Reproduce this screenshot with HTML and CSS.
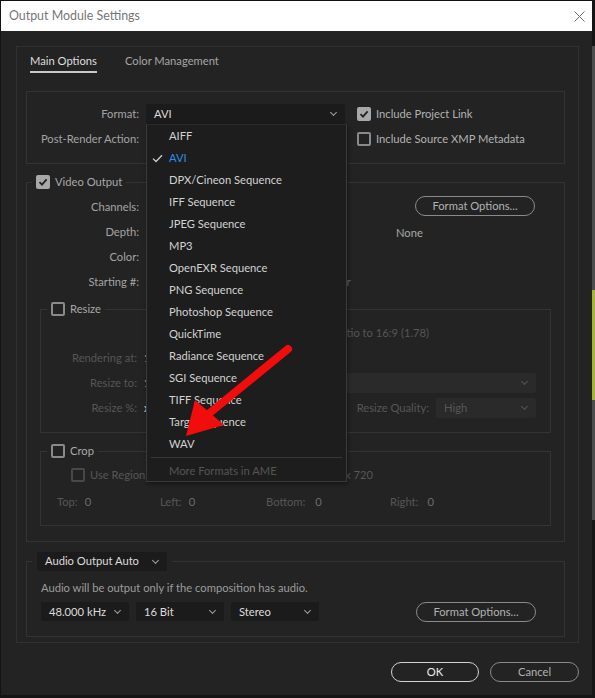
FILE: index.html
```html
<!DOCTYPE html>
<html lang="en">
<head>
  <meta charset="UTF-8">
  <title>Output Module Settings</title>
  <link rel="stylesheet" href="styles.css">
</head>
<body>
  <div class="window">
    <div class="titlebar">
      <span class="title">Output Module Settings</span>
      <svg class="close" width="11" height="11" viewBox="0 0 11 11">
        <path d="M0.5 0.5 L10.5 10.5 M10.5 0.5 L0.5 10.5" stroke="#6a6a6a" stroke-width="1" fill="none"/>
      </svg>
    </div>

    <div class="panel">
      <div class="tabs">
        <span class="tab active">Main Options</span>
        <span class="tab">Color Management</span>
      </div>

      <!-- Format -->
      <div class="box format-box">
        <div class="row">
          <span class="lbl">Format:</span>
          <div class="select format-select">AVI</div>
          <span class="check"><span class="cb on"><svg width="10" height="10" viewBox="0 0 10 10"><path d="M1.5 5.2 L4 7.6 L8.6 2.4" stroke="#222" stroke-width="1.8" fill="none"/></svg></span>Include Project Link</span>
        </div>
        <div class="row">
          <span class="lbl">Post-Render Action:</span>
          <div class="select format-select">None</div>
          <span class="check"><span class="cb"></span>Include Source XMP Metadata</span>
        </div>
      </div>

      <!-- Video output -->
      <fieldset class="group video">
        <legend><span class="cb on"><svg width="10" height="10" viewBox="0 0 10 10"><path d="M1.5 5.2 L4 7.6 L8.6 2.4" stroke="#222" stroke-width="1.8" fill="none"/></svg></span>Video Output</legend>
        <div class="video-top">
          <div class="video-rows">
            <div class="row">
              <span class="lbl">Channels:</span>
              <div class="select field">RGB</div>
            </div>
            <div class="row">
              <span class="lbl">Depth:</span>
              <div class="select field">Millions of Colors</div>
            </div>
            <div class="row">
              <span class="lbl">Color:</span>
              <div class="select field">Premultiplied (Matted)</div>
            </div>
            <div class="row">
              <span class="lbl">Starting #:</span>
              <span class="value">0</span>
              <span class="check frame-check"><span class="cb"></span>Use Comp Frame Number</span>
            </div>
          </div>
          <div class="video-side">
            <button class="btn">Format Options...</button>
            <span class="codec">None</span>
          </div>
        </div>

        <fieldset class="group sub resize">
          <legend><span class="cb"></span>Resize</legend>
          <div class="row lock-row">
            <span class="check dim"><span class="cb dim"></span>Lock Aspect Ratio to 16:9 (1.78)</span>
          </div>
          <div class="row">
            <span class="lbl sub-lbl dim">Rendering at:</span>
            <span class="value dim">1280 x 720</span>
          </div>
          <div class="row">
            <span class="lbl sub-lbl dim">Resize to:</span>
            <span class="value dim">1280 x 720</span>
            <div class="select disabled resize-select">Custom</div>
          </div>
          <div class="row">
            <span class="lbl sub-lbl dim">Resize %:</span>
            <span class="value dim">x</span>
            <span class="quality-lbl dim">Resize Quality:</span>
            <div class="select disabled quality-select">High</div>
          </div>
        </fieldset>

        <fieldset class="group sub crop">
          <legend><span class="cb"></span>Crop</legend>
          <div class="row roi-row">
            <span class="check dim"><span class="cb dim"></span>Use Region of Interest</span>
            <span class="dim">Final Size: 1280 x 720</span>
          </div>
          <div class="row crop-fields">
            <span class="crop-field"><span class="dim">Top:</span><span class="num">0</span></span>
            <span class="crop-field"><span class="dim">Left:</span><span class="num">0</span></span>
            <span class="crop-field"><span class="dim">Bottom:</span><span class="num">0</span></span>
            <span class="crop-field"><span class="dim">Right:</span><span class="num">0</span></span>
          </div>
        </fieldset>
      </fieldset>

      <!-- Audio -->
      <fieldset class="group audio">
        <legend><div class="select audio-mode">Audio Output Auto</div></legend>
        <div class="audio-body">
          <p class="audio-note">Audio will be output only if the composition has audio.</p>
          <div class="row audio-row">
            <div class="select audio-select">48.000 kHz</div>
            <div class="select audio-select">16 Bit</div>
            <div class="select audio-select">Stereo</div>
            <button class="btn audio-btn">Format Options...</button>
          </div>
        </div>
      </fieldset>
    </div>

    <div class="footer">
      <button class="btn btn-ok">OK</button>
      <button class="btn btn-cancel">Cancel</button>
    </div>

    <!-- open Format menu -->
    <div class="menu">
      <div class="menu-item">AIFF</div>
      <div class="menu-item selected"><svg class="tick" width="11" height="9" viewBox="0 0 11 9"><path d="M1 4.6 L4 7.5 L10 1.2" stroke="#cfcfcf" stroke-width="1.3" fill="none"/></svg>AVI</div>
      <div class="menu-item">DPX/Cineon Sequence</div>
      <div class="menu-item">IFF Sequence</div>
      <div class="menu-item">JPEG Sequence</div>
      <div class="menu-item">MP3</div>
      <div class="menu-item">OpenEXR Sequence</div>
      <div class="menu-item">PNG Sequence</div>
      <div class="menu-item">Photoshop Sequence</div>
      <div class="menu-item">QuickTime</div>
      <div class="menu-item">Radiance Sequence</div>
      <div class="menu-item">SGI Sequence</div>
      <div class="menu-item">TIFF Sequence</div>
      <div class="menu-item">Targa Sequence</div>
      <div class="menu-item">WAV</div>
      <div class="menu-sep"></div>
      <div class="menu-item muted">More Formats in AME</div>
    </div>

    <!-- red annotation arrow -->
    <svg class="arrow" width="595" height="698" viewBox="0 0 595 698">
      <line x1="288" y1="349" x2="206" y2="416" stroke="#f20d0d" stroke-width="8" stroke-linecap="round"/>
      <polygon points="195,400 224,425 186,436" fill="#f20d0d"/>
    </svg>
  </div>
</body>
</html>
```

FILE: styles.css
```css
* {
  box-sizing: border-box;
}

body {
  margin: 0;
  font-family: Lato, "Noto Sans", sans-serif;
  font-size: 11.2px;
  line-height: 16px;
  color: #a4a4a4;
  background: linear-gradient(#151515 0 46px, #4c4c4c 46px 290px, #a6b33a 290px 400px, #4c4c4c 400px 520px, #161616 520px 695px, #dcdcdc 695px);
}

.window {
  position: relative;
  width: 592px;
  height: 695px;
  background-color: #232323;
  border-top: 1px solid #101010;
  border-left: 1px solid #141414;
  overflow: hidden;
}

.titlebar {
  height: 30px;
  background-color: #fff;
  display: flex;
  align-items: center;
  justify-content: space-between;
  padding: 0 7px 0 8px;
}

.title {
  font-size: 12.4px;
  color: #767676;
}

/* main tab panel */
.panel {
  margin: 15px 0 0 15px;
  width: 563px;
  height: 597px;
  border: 1px solid #303030;
  padding: 6px 13px 0 9px;
}

.tabs {
  display: flex;
  gap: 28px;
  padding-left: 4px;
}

.tab {
  color: #a6a6a6;
  padding-bottom: 2px;
}

.tab.active {
  color: #dedede;
  border-bottom: 2px solid #c8c8c8;
}

.box {
  border: 1px solid #333;
}

.format-box {
  margin-top: 18px;
  height: 73px;
  padding-top: 9px;
}

.row {
  display: flex;
  align-items: center;
  height: 25px;
}

.lbl {
  width: 112px;
  flex: none;
  text-align: right;
  margin-right: 7px;
}

.select {
  position: relative;
  height: 20px;
  display: flex;
  align-items: center;
  padding-left: 8px;
  background-color: #1b1b1b;
  border-radius: 2px;
  color: #dcdcdc;
  white-space: nowrap;
}

.select::after {
  content: "";
  position: absolute;
  right: 9px;
  top: 6px;
  width: 4px;
  height: 4px;
  border-right: 1px solid #a0a0a0;
  border-bottom: 1px solid #a0a0a0;
  transform: rotate(45deg);
}

.select.disabled {
  background-color: #2a2a2a;
  color: #575757;
}

.select.disabled::after {
  border-color: #555;
}

.format-select {
  width: 199px;
}

.check {
  display: flex;
  align-items: center;
  gap: 5px;
  color: #b2b2b2;
  white-space: nowrap;
}

.format-box .check {
  margin-left: 12px;
}

.cb {
  width: 14px;
  height: 14px;
  flex: none;
  border: 2px solid #8a8a8a;
  border-radius: 2px;
  display: flex;
  align-items: center;
  justify-content: center;
}

.cb.on {
  background-color: #a8a8a8;
  border-color: #a8a8a8;
}

.cb.dim {
  border-color: #484848;
}

.dim {
  color: #565656;
}

/* group boxes */
.group {
  margin: 0;
  padding: 0;
  min-width: 0;
  border: 1px solid #333;
}

.group legend {
  display: flex;
  align-items: center;
  gap: 5px;
  height: 16px;
  padding: 0 4px;
  margin-left: 5px;
  color: #a8a8a8;
}

.video {
  margin-top: 10px;
  padding: 4px 13px 15px 0;
}

.video-top {
  display: flex;
  justify-content: space-between;
}

.video-rows {
  flex: 1;
}

.field {
  width: 160px;
}

.value {
  color: #dcdcdc;
  margin-right: 10px;
}

.frame-check {
  margin-left: 42px;
  color: #6a6a6a;
}

.video-side {
  width: 139px;
  margin-right: 16px;
  padding-top: 2px;
  display: flex;
  flex-direction: column;
  align-items: flex-end;
}

.codec {
  align-self: flex-start;
  margin-top: 9px;
  color: #a8a8a8;
}

.btn {
  font-family: inherit;
  font-size: 11.2px;
  width: 120px;
  height: 20px;
  padding: 0;
  line-height: 16px;
  border: 1px solid #8a8a8a;
  border-radius: 10px;
  background: transparent;
  color: #b2b2b2;
}

.sub {
  margin: 7px 0 0 13px;
}

.sub legend {
  margin-left: 6px;
}

.resize {
  padding: 3px 0 12px 0;
}

.lock-row {
  justify-content: flex-end;
  padding-right: 121px;
}

.sub-lbl {
  width: 96px;
}

.resize-select {
  margin-left: auto;
  margin-right: 14px;
  width: 240px;
}

.quality-lbl {
  margin-left: auto;
  margin-right: 7px;
}

.quality-select {
  width: 100px;
  margin-right: 14px;
}

.crop {
  margin-top: 10px;
  padding: 3px 0 11px 0;
}

.roi-row {
  width: 332px;
  padding-left: 30px;
  justify-content: space-between;
}

.crop-fields {
  margin-top: 2px;
  padding-left: 16px;
}

.crop-field {
  display: flex;
  gap: 7px;
  width: 103px;
}

.crop-field:nth-child(2) {
  width: 106px;
}

.crop-field:nth-child(3) {
  width: 124px;
  gap: 10px;
}

.crop-field:nth-child(4) {
  gap: 9px;
}

.num {
  color: #6c6c6c;
}

/* audio */
.audio {
  margin-top: 11px;
  height: 84px;
}

.audio legend {
  padding: 0 5px;
}

.audio-body {
  padding: 0 13px 0 14px;
}

.audio-mode {
  width: 130px;
  height: 19px;
}

.audio-note {
  margin: 11px 0 0 0;
  color: #9c9c9c;
}

.audio-row {
  margin-top: 3px;
  gap: 7px;
}

.audio-select {
  width: 88px;
  height: 19px;
}

.audio-btn {
  margin-left: auto;
  margin-right: 15px;
}

.footer {
  display: flex;
  justify-content: flex-end;
  gap: 11px;
  margin-top: 19px;
  padding-right: 13px;
}

.btn-ok {
  width: 88px;
  border-color: #d2d2d2;
  color: #ececec;
}

.btn-cancel {
  width: 89px;
}

/* dropdown menu */
.menu {
  position: absolute;
  left: 145px;
  top: 123px;
  width: 201px;
  height: 358px;
  background-color: #1d1d1d;
  border: 1px solid #3a3a3a;
  border-top-color: #2a2a2a;
  box-shadow: 1px 2px 4px rgba(0, 0, 0, 0.4);
}

.menu-item {
  position: relative;
  height: 22px;
  line-height: 22px;
  padding-left: 22px;
  color: #d2d2d2;
}

.menu-item.selected {
  color: #2f8de8;
}

.tick {
  position: absolute;
  left: 5px;
  top: 7px;
}

.menu-item.muted {
  color: #555;
}

.menu-sep {
  height: 1px;
  margin: 2px 4px 2px 4px;
  background-color: #383838;
}

.arrow {
  position: absolute;
  left: -1px;
  top: -1px;
  pointer-events: none;
}
```
